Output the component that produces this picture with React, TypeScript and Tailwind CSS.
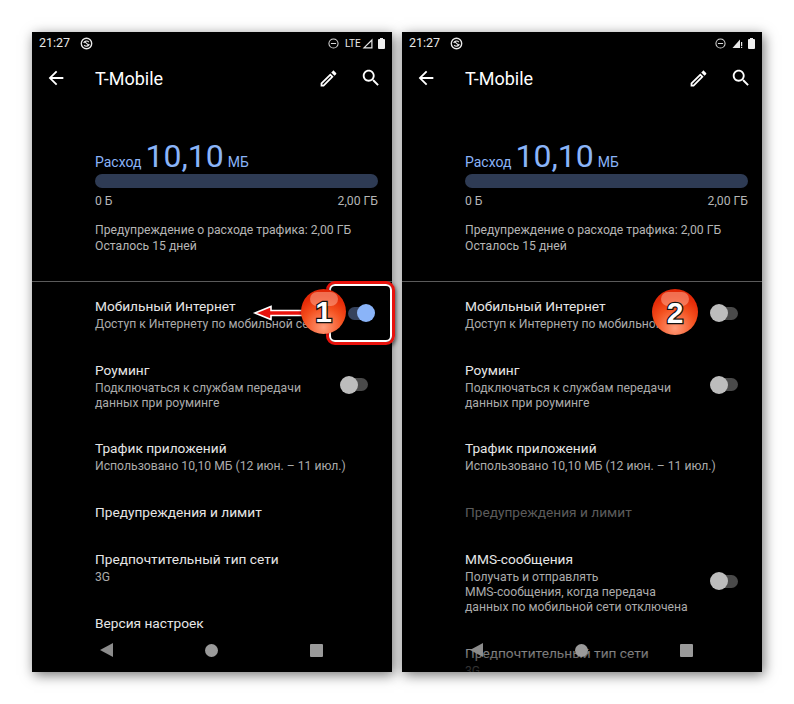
import React from 'react';

const BackIcon = 'M20 11H7.83l5.59-5.59L12 4l-8 8 8 8 1.41-1.41L7.83 13H20v-2z';
const PencilIcon = 'M3 17.25V21h3.75L17.81 9.94l-3.75-3.75L3 17.25zM5.92 19H5v-.92l9.06-9.06.92.92L5.92 19zM20.71 5.63l-2.34-2.34c-.39-.39-1.02-.39-1.41 0l-1.83 1.83 3.75 3.75 1.83-1.83c.39-.39.39-1.02 0-1.41z';
const SearchIcon = 'M15.5 14h-.79l-.28-.27C15.41 12.59 16 11.11 16 9.5 16 5.91 13.09 3 9.5 3S3 5.91 3 9.5 5.91 16 9.5 16c1.61 0 3.09-.59 4.23-1.57l.27.28v.79l5 4.99L20.49 19l-4.99-5zm-6 0C7.01 14 5 11.99 5 9.5S7.01 5 9.5 5 14 7.01 14 9.5 11.99 14 9.5 14z';

const Icon = ({ d, className }: { d: string; className: string }) => (
    <svg viewBox="0 0 24 24" className={className} fill="currentColor">
        <path d={d} />
    </svg>
);

const DataSaver = () => (
    <svg viewBox="0 0 14 14" className="w-[13px] h-[13px] ml-[10px]" fill="none" stroke="#e8e8e8">
        <circle cx="7" cy="7" r="5.6" strokeWidth="1.5" />
        <path d="M4 6.5a3.2 3.2 0 0 1 5.5-1M10 7.5a3.2 3.2 0 0 1-5.5 1.2" strokeWidth="1.3" />
        <path d="M5 5l4.5 4" strokeWidth="1.2" />
    </svg>
);

const Dnd = () => (
    <svg viewBox="0 0 12 12" className="w-[11px] h-[11px]" fill="none" stroke="#d8d8d8" strokeWidth="1.1">
        <circle cx="6" cy="6" r="5" />
        <path d="M3.2 6h5.6" />
    </svg>
);

const Signal = ({ off }: { off?: boolean }) => (
    <svg viewBox="0 0 11 11" className="w-[11px] h-[11px]">
        {off ? (
            <>
                <path d="M8 1.5V10H0.5z" fill="#e8e8e8" />
                <path d="M9 4h1.2v4H9zM9 8.8h1.2V10H9z" fill="#e8e8e8" />
            </>
        ) : (
            <path d="M10.5 0.5V10.5H0.5zM9.3 3.4 3.4 9.3h5.9z" fill="#e8e8e8" fillRule="evenodd" />
        )}
    </svg>
);

const Battery = () => (
    <div className="flex flex-col items-center ml-[5px]">
        <div className="w-[3px] h-[1px] bg-[#eeeeee]" />
        <div className="w-[7px] h-[10px] bg-[#eeeeee] rounded-[1px]" />
    </div>
);

const Toggle = ({ on }: { on?: boolean }) => (
    <div className={`flex items-center relative w-[35px] h-[18px] shrink-0 ${on ? 'justify-end' : 'justify-start'}`}>
        <div className={`absolute right-[7px] left-[8px] h-[13px] rounded-full ${on ? 'bg-[#35425c]' : 'bg-[#4a4a4a]'}`} />
        <div className={`relative w-[18px] h-[18px] rounded-full ${on ? 'bg-[#8ab4f8]' : 'bg-[#bdbdbd]'}`} />
    </div>
);

type RowProps = { title: string; sub?: string[]; toggle?: 'on' | 'off'; dim?: boolean; toggleClass?: string };

const Row = ({ title, sub, toggle, dim, toggleClass }: RowProps) => (
    <div className="flex items-start pl-[63px] pr-[17px]">
        <div className="flex-1 min-w-0">
            <div className={`text-[13.7px] leading-[20px] whitespace-nowrap ${dim ? 'text-[#5c5c5c]' : 'text-[#e6e6e6]'}`}>{title}</div>
            {sub && (
                <div className="mt-[1px] text-[12.2px] leading-[15px] text-[#ababab] whitespace-nowrap">
                    {sub.map((line) => (
                        <div key={line}>{line}</div>
                    ))}
                </div>
            )}
        </div>
        {toggle && (
            <div className={toggleClass}>
                <Toggle on={toggle === 'on'} />
            </div>
        )}
    </div>
);

const Phone = ({ lte, rows }: { lte?: boolean; rows: RowProps[] }) => (
    <div className="relative w-[360px] h-[640px] bg-black overflow-hidden shadow-[2px_3px_12px_rgba(0,0,0,0.55)] shrink-0">
        {/* status bar */}
        <div className="flex items-center h-[23px] pl-[7px] pr-[7px] text-[12.5px] text-[#e8e8e8]">
            <span>21:27</span>
            <DataSaver />
            <div className="flex-1" />
            <Dnd />
            {lte && <span className="text-[10px] ml-[6px] mr-[3px] w-[14px]">LTE</span>}
            <div className={lte ? '' : 'ml-[6px]'}>
                <Signal off={!lte} />
            </div>
            <Battery />
        </div>
        {/* toolbar */}
        <div className="flex items-center h-[46px] text-white">
            <Icon d={BackIcon} className="w-[22px] h-[22px] ml-[13px]" />
            <div className="ml-[28px] text-[18px] flex-1">T-Mobile</div>
            <Icon d={PencilIcon} className="w-[21px] h-[21px] mr-[21px]" />
            <Icon d={SearchIcon} className="w-[22px] h-[22px] mr-[10px]" />
        </div>
        {/* usage */}
        <div className="pl-[63px] pr-[14px] pt-[38px] h-[181px] border-b border-[#5a5a5a]">
            <div className="flex items-baseline text-[#8ab4f8] h-[34px] leading-[34px]">
                <span className="text-[14px]">Расход</span>
                <span className="text-[32px] ml-[4px]">10,10</span>
                <span className="text-[14px] ml-[4px]">МБ</span>
            </div>
            <div className="h-[14px] mt-[1px] rounded-full bg-[#2e3b54]" />
            <div className="flex justify-between mt-[5px] text-[12.2px] leading-[16px] text-[#b5b5b5]">
                <span>0 Б</span>
                <span>2,00 ГБ</span>
            </div>
            <div className="mt-[13px] text-[12.2px] leading-[16px] text-[#b5b5b5]">
                <div>Предупреждение о расходе трафика: 2,00 ГБ</div>
                <div>Осталось 15 дней</div>
            </div>
        </div>
        {/* settings list */}
        <div className="flex flex-col gap-[27.5px] pt-[14px]">
            {rows.map((row) => (
                <Row key={row.title} {...row} />
            ))}
        </div>
        {/* nav bar */}
        <div className="absolute left-0 right-0 bottom-0 h-[44px] bg-linear-to-b from-transparent to-black/80" />
        <div className="absolute left-0 right-0 top-[611px] h-[14px] flex items-center text-[#8c8c8c]">
            <svg viewBox="0 0 14 14" className="w-[14px] h-[14px] absolute left-[68px]" fill="currentColor">
                <path d="M13 0v14L0 7z" />
            </svg>
            <div className="w-[13px] h-[13px] rounded-full bg-[#9a9a9a] absolute left-[173px]" />
            <div className="w-[13px] h-[13px] rounded-[1px] bg-[#9a9a9a] absolute left-[278px]" />
        </div>
    </div>
);

const Sticker = ({ n, className }: { n: string; className: string }) => (
    <div
        className={`absolute rounded-full flex items-center justify-center bg-[radial-gradient(circle_at_50%_85%,#ff9c7a_0%,#f4501e_45%,#e62c08_70%,#d92004_100%)] shadow-[0_0_3px_rgba(0,0,0,0.5)] font-['Liberation_Sans',sans-serif] font-bold text-white [-webkit-text-stroke:2.5px_#111] [paint-order:stroke_fill] ${className}`}
    >
        <div className="absolute top-[3px] left-1/2 -translate-x-1/2 w-[28px] h-[14px] rounded-full bg-[#ffb39c]/50" />
        <span className="relative">{n}</span>
    </div>
);

const App = () => {
    const left: RowProps[] = [
        { title: 'Мобильный Интернет', sub: ['Доступ к Интернету по мобильной сети'], toggle: 'on', toggleClass: 'mt-[8px]' },
        { title: 'Роуминг', sub: ['Подключаться к службам передачи', 'данных при роуминге'], toggle: 'off', toggleClass: 'mt-[16px]' },
        { title: 'Трафик приложений', sub: ['Использовано 10,10 МБ (12 июн. – 11 июл.)'] },
        { title: 'Предупреждения и лимит' },
        { title: 'Предпочтительный тип сети', sub: ['3G'] },
        { title: 'Версия настроек' },
    ];
    const right: RowProps[] = [
        { title: 'Мобильный Интернет', sub: ['Доступ к Интернету по мобильной сети'], toggle: 'off', toggleClass: 'mt-[8px]' },
        { title: 'Роуминг', sub: ['Подключаться к службам передачи', 'данных при роуминге'], toggle: 'off', toggleClass: 'mt-[16px]' },
        { title: 'Трафик приложений', sub: ['Использовано 10,10 МБ (12 июн. – 11 июл.)'] },
        { title: 'Предупреждения и лимит', dim: true },
        { title: 'MMS-сообщения', sub: ['Получать и отправлять', 'MMS-сообщения, когда передача', 'данных по мобильной сети отключена'], toggle: 'off', toggleClass: 'mt-[23px]' },
        { title: 'Предпочтительный тип сети', sub: ['3G'] },
    ];

    return (
        <div className="relative w-[794px] h-[704px] bg-white flex gap-[10px] pl-[32px] pt-[32px] font-['Roboto',sans-serif]">
            <Phone lte rows={left} />
            <Phone rows={right} />

            {/* annotations */}
            <div className="absolute left-[326px] top-[281px] w-[69px] h-[64px] rounded-[9px] border-[3px] border-[#e8120c] outline-2 outline-white -outline-offset-[5px] shadow-[1px_2px_4px_rgba(0,0,0,0.6)]" />
            <svg viewBox="0 0 60 20" className="absolute left-[252px] top-[303px] w-[60px] h-[20px]">
                <path d="M3 10 19 3.5v4h41v5H19v4z" fill="#e8120c" stroke="#ffffff" strokeWidth="1.6" />
            </svg>
            <Sticker n="1" className="left-[301px] top-[289px] w-[45px] h-[45px] text-[30px]" />
            <Sticker n="2" className="left-[652px] top-[289px] w-[46px] h-[46px] text-[30px]" />
        </div>
    );
};

export default App;
